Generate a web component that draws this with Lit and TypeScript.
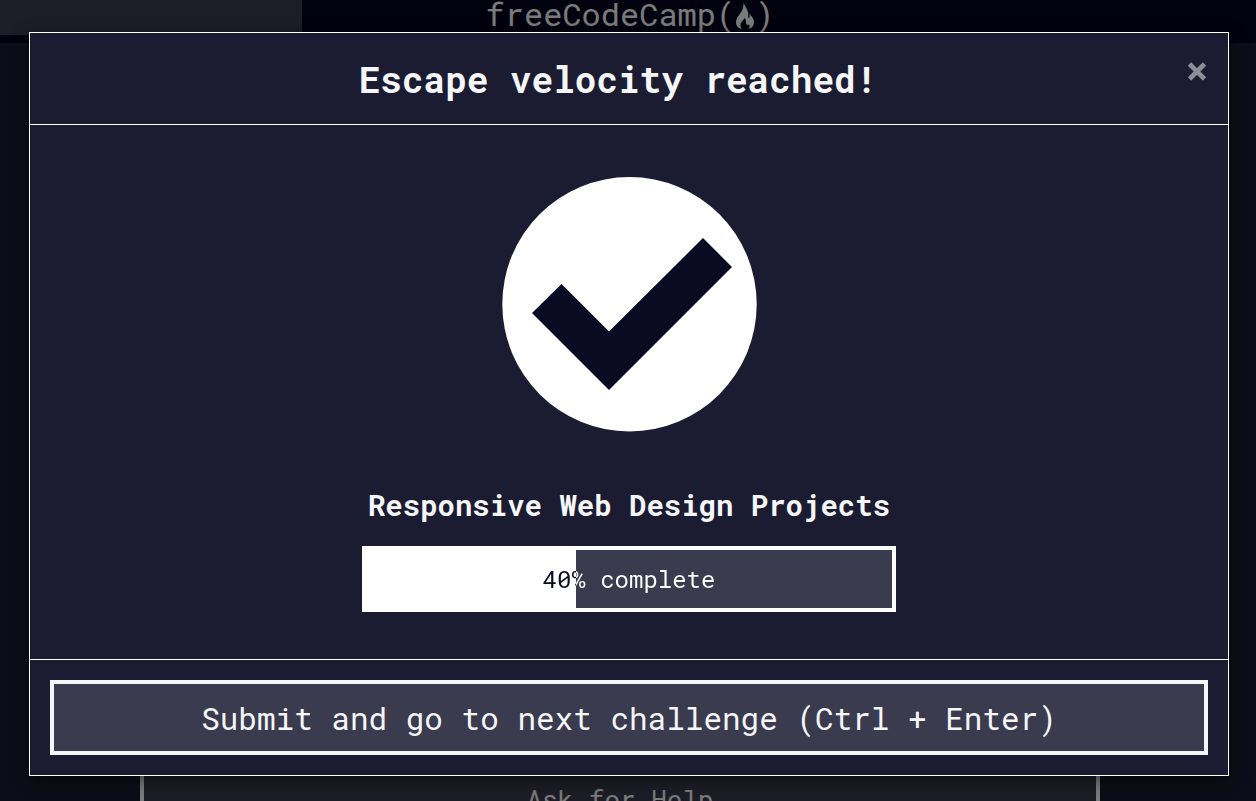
import { LitElement, html, css } from "lit";
import { customElement, property } from "lit/decorators.js";
import { styleMap } from "lit/directives/style-map.js";

@customElement("completion-progress")
class CompletionProgress extends LitElement {
  @property({ type: Number }) value = 0;

  static styles = css`
    :host {
      display: block;
    }
    .bar {
      box-sizing: border-box;
      height: 66px;
      border: 4px solid #fff;
      font-size: 24px;
      line-height: 58px;
      text-align: center;
      background: linear-gradient(to right, #fff var(--done), #3b3b4f var(--done));
      background-origin: padding-box;
      background-clip: padding-box;
    }
    .label {
      display: block;
      color: transparent;
      background: linear-gradient(to right, #0a0a23 var(--done), #fff var(--done));
      -webkit-background-clip: text;
      background-clip: text;
    }
  `;

  render() {
    return html`
      <div
        class="bar"
        role="progressbar"
        aria-valuemin="0"
        aria-valuemax="100"
        aria-valuenow=${this.value}
        aria-labelledby="label"
        style=${styleMap({ "--done": `${this.value}%` })}
      >
        <span class="label" id="label">${this.value}% complete</span>
      </div>
    `;
  }
}

@customElement("app-root")
class AppRoot extends LitElement {
  static styles = css`
    :host {
      display: block;
      position: relative;
      height: 100vh;
      overflow: hidden;
      background: #1b1b32;
      color: #f5f6f7;
      font-family: "Roboto Mono", "DejaVu Sans Mono", "Liberation Mono", monospace;
    }
    button,
    input {
      box-sizing: border-box;
      margin: 0;
      font: inherit;
      color: inherit;
      border-radius: 0;
    }
    .nav {
      display: grid;
      grid-template-columns: 1fr auto 1fr;
      height: 43px;
      background: #05051c;
    }
    .search {
      width: 302px;
      height: 35px;
      border: 0;
      background: #3b3b4f;
    }
    .logo {
      display: flex;
      align-items: center;
      height: 28px;
      padding-left: 4px;
      color: #f5f6f7;
      font-size: 32px;
      font-weight: 300;
      line-height: 28px;
      text-decoration: none;
    }
    .flame {
      width: 20px;
      height: 28px;
      margin-top: 3px;
      fill: currentColor;
    }
    .page {
      padding: 718px 156px 0 140px;
    }
    .help {
      width: 100%;
      height: 75px;
      border: 4px solid #f5f6f7;
      background: #3b3b4f;
      font-size: 26px;
    }
    .backdrop {
      position: absolute;
      inset: 0;
      padding: 32px 27px 25px 29px;
      background: rgba(0, 0, 0, 0.5);
    }
    .modal {
      border: 1px solid #fff;
      background: #1b1b32;
      box-shadow: 0 5px 15px rgba(0, 0, 0, 0.5);
    }
    .head {
      display: flex;
      align-items: flex-start;
      padding: 21px 20px 19px;
      border-bottom: 1px solid #fff;
    }
    .title {
      flex: 1;
      margin: 0;
      font-size: 36px;
      line-height: 51px;
      font-weight: 700;
      text-align: center;
    }
    .close {
      display: flex;
      padding: 7px 0 0;
      border: 0;
      background: none;
      color: #8d8d98;
    }
    .cross {
      width: 22px;
      height: 22px;
      stroke: currentColor;
      stroke-width: 4.6;
      fill: none;
    }
    .body {
      display: flex;
      flex-direction: column;
      align-items: center;
      padding: 52px 20px 47px;
    }
    .check {
      width: 255px;
      height: 255px;
    }
    .block {
      margin: 53px 0 21px;
      font-size: 29px;
      line-height: 40px;
      font-weight: 700;
      text-align: center;
    }
    .progress {
      width: 534px;
      max-width: 100%;
    }
    .foot {
      padding: 20px;
      border-top: 1px solid #fff;
    }
    .submit {
      display: block;
      width: 100%;
      height: 75px;
      padding: 0;
      border: 4px solid #f5f6fa;
      background: #3b3b4f;
      font-size: 31px;
    }
    .wordmark {
      font-weight: 400;
    }
  `;

  render() {
    return html`
      <header class="nav">
        <input class="search" type="search" aria-label="Search" />
        <a class="logo" href="#">
          <span class="wordmark">freeCodeCamp(</span>
          <svg class="flame" viewBox="0 0 20 28" aria-hidden="true">
            <path
              d="M8.500 1C10.200 4.500 12.600 7.500 13.200 11C13.500 13.500 12.600 15.500 13.800 16C14.800 16 14.600 14 14.200 12C17.500 14.500 19.500 18 18.900 21.500C18.400 24.300 16.500 26.500 13.500 27C14.800 25.500 15 23.500 14 22.500C12.800 23.600 10.700 22.500 11 20.500C11.200 18.500 10.500 17 9.500 16C8.500 18.500 5.600 20 5.500 23C5.500 24.700 6 26 7 27C3.500 26.500 1 24 1 20.500C1 15.500 5 12.500 7 8.500C8.200 6 8.500 3.500 8.500 1Z"
            />
          </svg>
          <span class="wordmark">)</span>
        </a>
      </header>
      <main class="page">
        <button class="help" type="button">Ask for Help</button>
      </main>
      <div class="backdrop">
        <section class="modal" role="dialog" aria-modal="true" aria-labelledby="title">
          <header class="head">
            <h2 class="title" id="title">Escape velocity reached!</h2>
            <button class="close" type="button" aria-label="Close">
              <svg class="cross" viewBox="0 0 22 22" aria-hidden="true">
                <path d="M3.500 3L18.500 18M18.500 3L3.500 18" />
              </svg>
            </button>
          </header>
          <div class="body">
            <svg class="check" viewBox="0 0 255 255" role="img" aria-label="Passed">
              <circle cx="127.500" cy="127.200" r="127.200" fill="#fff" />
              <path d="M30 136L59.500 107L107 154.500L201 61L230 90L107 213Z" fill="#0a0a23" />
            </svg>
            <h3 class="block">Responsive Web Design Projects</h3>
            <completion-progress class="progress" .value=${40}></completion-progress>
          </div>
          <footer class="foot">
            <button class="submit" type="button">Submit and go to next challenge (Ctrl + Enter)</button>
          </footer>
        </section>
      </div>
    `;
  }
}
